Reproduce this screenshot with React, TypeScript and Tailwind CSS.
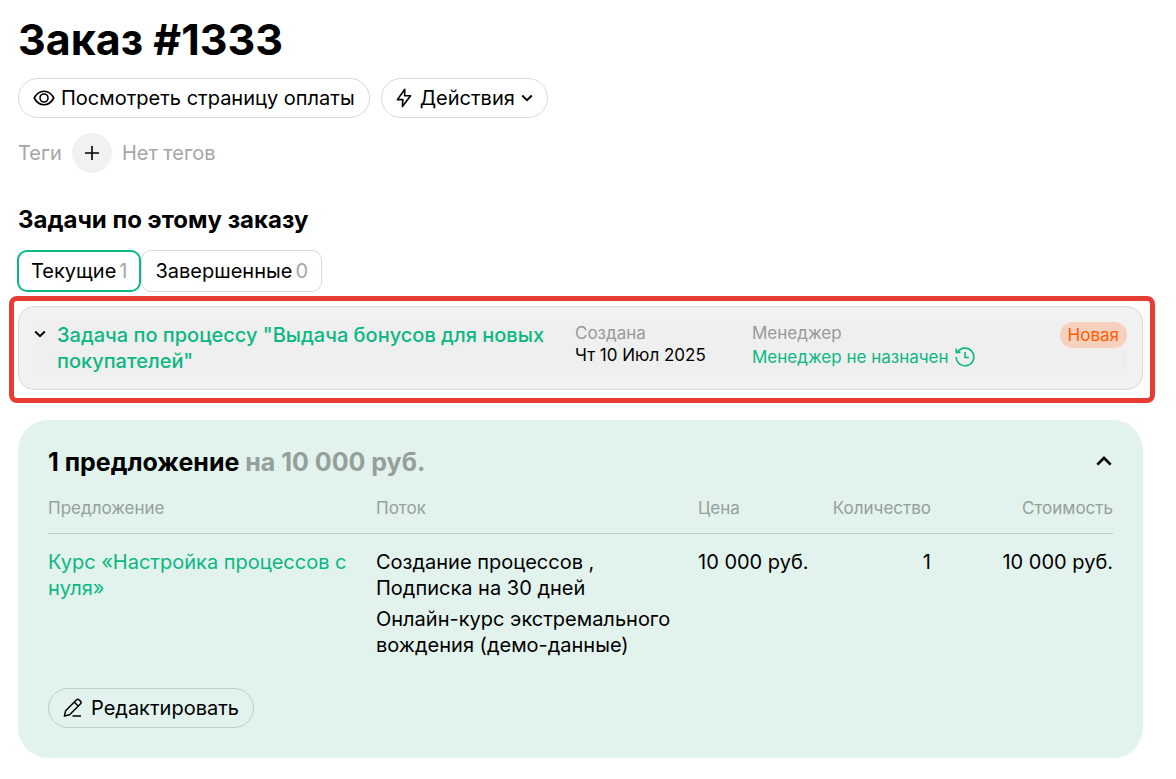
import React from "react";

const headCell = "pb-[15px] text-[17px] leading-5 font-normal text-[#93a09b]";

function Eye() {
  return (
    <svg width="22" height="16" viewBox="0 0 22 16" fill="none" stroke="currentColor" strokeWidth="1.6" strokeLinejoin="round" aria-hidden="true">
      <path d="M1.2 8C3.6 3.6 7 1.2 11 1.2S18.4 3.6 20.8 8C18.4 12.4 15 14.8 11 14.8S3.6 12.4 1.2 8Z" />
      <circle cx="11" cy="8" r="4" />
    </svg>
  );
}

function Bolt() {
  return (
    <svg width="16" height="20" viewBox="0 0 16 20" fill="none" stroke="currentColor" strokeWidth="1.6" strokeLinejoin="round" aria-hidden="true">
      <path d="M8.8 1.2 1.4 11.6H6.8L6.4 18.6 14.6 7.8H8.6Z" />
    </svg>
  );
}

function Chevron({ up = false, size = 12 }: { up?: boolean; size?: number }) {
  return (
    <svg width={size} height={size} viewBox="0 0 12 12" fill="none" stroke="currentColor" strokeWidth="2" aria-hidden="true">
      <path d={up ? "M1 8 6 3l5 5" : "M1.2 3.5 6 8.2l4.8-4.7"} />
    </svg>
  );
}

function History() {
  return (
    <svg width="20" height="20" viewBox="0 0 20 20" fill="none" stroke="currentColor" strokeWidth="1.6" aria-hidden="true">
      <path d="M2.6 5.2A8.8 8.8 0 1 1 1.2 10" />
      <path d="M1.3 1.6V5.4H5.4" />
      <path d="M10 5v5.500h4" />
    </svg>
  );
}

function Pencil() {
  return (
    <svg width="20" height="20" viewBox="0 0 20 20" fill="none" stroke="currentColor" strokeWidth="1.5" strokeLinejoin="round" aria-hidden="true">
      <path d="M1.4 18 2.6 12.8 13.6 1.8a1.6 1.6 0 0 1 2.4 0l1.6 1.6a1.6 1.6 0 0 1 0 2.4L6.6 16.8ZM11.4 4.2l3.8 3.8M9.500 18h8.500" />
    </svg>
  );
}

export default function App() {
  return (
    <main className="pt-[15px] pr-[33px] pb-5 pl-[18px] font-['Inter','Noto_Sans',sans-serif] text-xl text-black">
      <h1 className="text-[43px] leading-[48px] font-bold">Заказ #1333</h1>

      <div className="mt-[15px] flex gap-[11px]">
        <button type="button" className="flex h-10 items-center gap-[6px] rounded-full border border-[#d9d9d9] px-[14px]">
          <Eye />
          Посмотреть страницу оплаты
        </button>
        <button type="button" className="flex h-10 items-center gap-2 rounded-full border border-[#d9d9d9] px-[14px]">
          <Bolt />
          <span className="flex items-center gap-[6px]">
            Действия
            <Chevron />
          </span>
        </button>
      </div>

      <div className="mt-[15px] flex items-center gap-[10px] text-[#a6a6a6]">
        <span>Теги</span>
        <button type="button" aria-label="Добавить тег" className="flex size-10 items-center justify-center rounded-full bg-[#f1f1f1] text-black">
          <svg width="16" height="16" viewBox="0 0 16 16" stroke="currentColor" strokeWidth="1.6" aria-hidden="true">
            <path d="M8 1v14M1 8h14" />
          </svg>
        </button>
        <span>Нет тегов</span>
      </div>

      <h2 className="mt-[33px] text-2xl leading-7 font-bold">Задачи по этому заказу</h2>

      <div className="-ml-px mt-4 flex">
        <button type="button" className="flex h-[42px] items-center gap-[3px] rounded-[10px] border-2 border-[#0bb783] px-3">
          Текущие<span className="text-[#a6a6a6]">1</span>
        </button>
        <button type="button" className="flex h-[42px] items-center gap-[3px] rounded-[10px] border border-[#d9d9d9] px-[13px]">
          Завершенные<span className="text-[#a6a6a6]">0</span>
        </button>
      </div>

      <section className="relative mt-[14px] rounded-2xl border border-[#d9d9d9] bg-[#f1f1f1] p-[15px]">
        <div className="flex items-start bg-[#efefef]">
          <button type="button" aria-label="Развернуть задачу" className="mt-[6px] flex w-[23px]">
            <Chevron />
          </button>
          <a href="#task" className="w-[518px] pr-5 leading-[26px] font-medium text-[#0bb783]">
            Задача по процессу "Выдача бонусов для новых покупателей"
          </a>
          <div className="w-[177px] text-[17px] leading-[22px]">
            <div className="text-[#999]">Создана</div>
            <div>Чт 10 Июл 2025</div>
          </div>
          <div className="flex-1 text-[17px] leading-[22px]">
            <div className="text-[#999]">Менеджер</div>
            <a href="#manager" className="flex items-center gap-[6px] leading-[26px] text-[#0bb783]">
              Менеджер не назначен
              <History />
            </a>
          </div>
          <span className="rounded-full bg-[#f5d1bd] px-2 text-[17px] leading-[26px] text-[#ff5c00]">Новая</span>
        </div>
        <div className="pointer-events-none absolute -top-[11px] -right-[13px] -bottom-[14px] -left-[10px] rounded-lg border-5 border-[#e63c32]" />
      </section>

      <section className="mt-[30px] rounded-[30px] bg-[#e2f3ed] p-[30px]">
        <div className="flex items-center justify-between">
          <h2 className="text-[25px] leading-6 font-bold">
            1 предложение <span className="text-[#93a09b]">на 10 000 руб.</span>
          </h2>
          <button type="button" aria-label="Свернуть" className="px-[1px]">
            <Chevron up size={16} />
          </button>
        </div>

        <table className="mt-6 w-full table-fixed text-left leading-[26px]">
          <colgroup>
            <col className="w-[328px]" />
            <col />
            <col className="w-[130px]" />
            <col className="w-[103px]" />
            <col className="w-[182px]" />
          </colgroup>
          <thead>
            <tr className="border-b border-[#bccdc7]">
              <th className={headCell}>Предложение</th>
              <th className={headCell}>Поток</th>
              <th className={headCell}>Цена</th>
              <th className="pb-[15px] text-right text-[17px] leading-5 font-normal text-[#93a09b]">Количество</th>
              <th className="pb-[15px] text-right text-[17px] leading-5 font-normal text-[#93a09b]">Стоимость</th>
            </tr>
          </thead>
          <tbody>
            <tr className="align-top">
              <td className="pt-[15px] pr-6">
                <a href="#course" className="text-[#0bb783]">
                  Курс «Настройка процессов с нуля»
                </a>
              </td>
              <td className="pt-[15px] pr-6">
                <p>Создание процессов , Подписка на 30 дней</p>
                <p className="mt-[5px]">Онлайн-курс экстремального вождения (демо-данные)</p>
              </td>
              <td className="pt-[15px] whitespace-nowrap">10 000 руб.</td>
              <td className="pt-[15px] text-right">1</td>
              <td className="pt-[15px] text-right whitespace-nowrap">10 000 руб.</td>
            </tr>
          </tbody>
        </table>

        <button type="button" className="mt-[30px] flex h-10 items-center gap-2 rounded-full border border-[#bccdc7] px-[14px]">
          <Pencil />
          Редактировать
        </button>
      </section>
    </main>
  );
}
